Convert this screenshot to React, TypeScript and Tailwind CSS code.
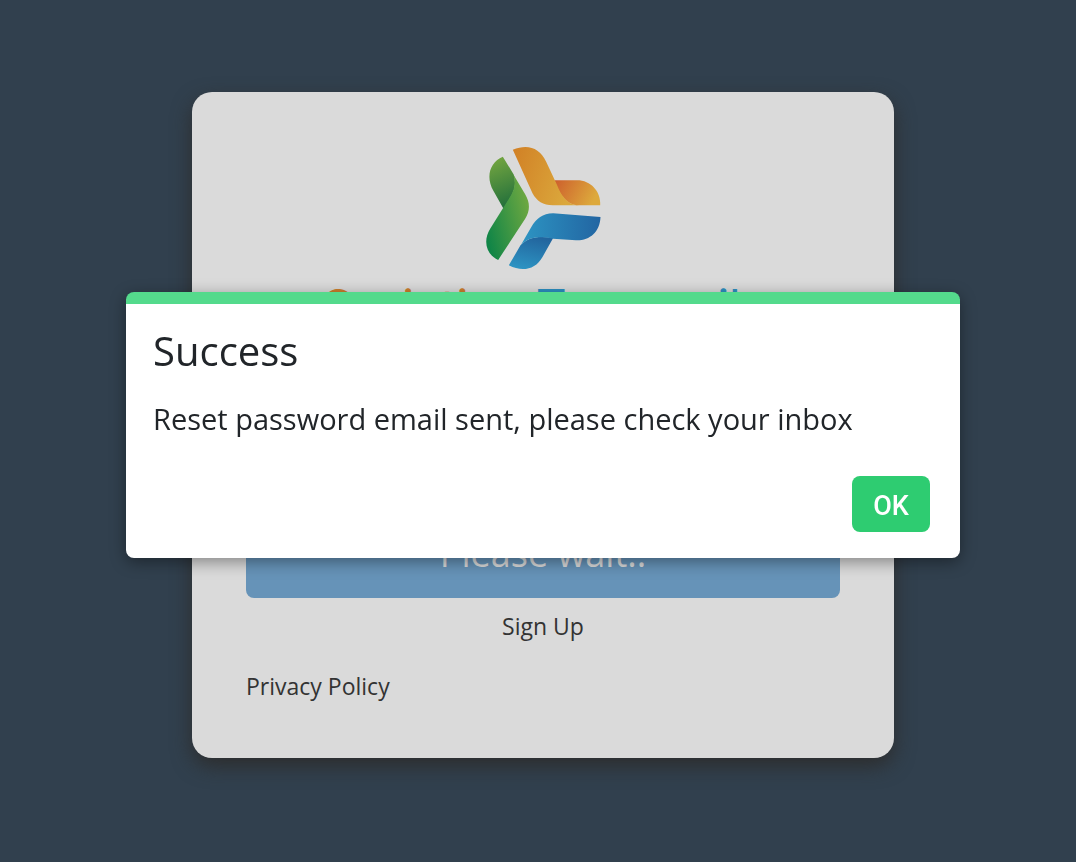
import { useState } from 'react';

function Logo() {
  return (
    <svg viewBox="36 30 350 378" className="h-[126px] w-[117px]" role="img" aria-label="Logo">
      <defs>
        <linearGradient id="orange" x1="0" y1="0" x2="1" y2="0.3">
          <stop offset="0%" stopColor="#d18025" />
          <stop offset="100%" stopColor="#dba83c" />
        </linearGradient>
        <linearGradient id="orangeFold" x1="0" y1="0" x2="1" y2="0.3">
          <stop offset="0%" stopColor="#cd5f2c" />
          <stop offset="100%" stopColor="#dda93c" />
        </linearGradient>
        <linearGradient id="green" x1="0" y1="0.7" x2="1" y2="0.2">
          <stop offset="0%" stopColor="#108547" />
          <stop offset="100%" stopColor="#74aa40" />
        </linearGradient>
        <linearGradient id="greenFold" x1="0.3" y1="0" x2="0.5" y2="1">
          <stop offset="0%" stopColor="#74a640" />
          <stop offset="100%" stopColor="#226f3b" />
        </linearGradient>
        <linearGradient id="blue" x1="0" y1="0.3" x2="1" y2="0.3">
          <stop offset="0%" stopColor="#2d95c3" />
          <stop offset="100%" stopColor="#2265a2" />
        </linearGradient>
        <linearGradient id="blueFold" x1="0.6" y1="0" x2="0.3" y2="1">
          <stop offset="0%" stopColor="#22659e" />
          <stop offset="100%" stopColor="#2d94c3" />
        </linearGradient>
      </defs>
      <path d="M244 136H312C352 136 383 168 381 211H310C270 205 250 160 244 136Z" fill="url(#orangeFold)" />
      <path d="M119 44C164 26 199 38 219 80L252 151C263 178 281 211 318 211H239C210 211 190 198 178 175Z" fill="url(#orange)" />
      <path d="M89 65L122 119C132 155 121 176 91 221L61 168C36 124 51 81 89 65Z" fill="url(#greenFold)" />
      <path d="M121 119L156 178C171 204 171 226 156 251L75 375C38 358 29 316 51 281L103 198C119 174 130 154 121 119Z" fill="url(#green)" />
      <path d="M240 309L208 366C187 404 147 412 107 391L142 331C166 304 201 303 240 309Z" fill="url(#blueFold)" />
      <path d="M240 235L382 246C380 292 348 318 308 316L240 311C190 302 163 308 142 332L174 277C190 250 208 236 240 235Z" fill="url(#blue)" />
    </svg>
  );
}

export default function App() {
  const [open, setOpen] = useState(true);

  return (
    <div className="flex min-h-screen items-center justify-center bg-[#31404e] pb-3 pl-[10px] font-['Open_Sans',sans-serif] text-[#333333]">
      <main className="flex min-h-[666px] w-full max-w-[702px] flex-col items-center rounded-[20px] bg-[#dadada] px-[54px] pt-[53px] pb-14 shadow-[0_8px_20px_#2d2d2d]">
        <Logo />
        <h1 className="mt-3 font-['Inter',sans-serif] text-5xl whitespace-nowrap text-[#cc7e2d]">
          Curiative <span className="text-[#2c8fc0]">Transcails</span>
        </h1>
        <button
          type="button"
          disabled
          className="mt-auto w-full rounded-lg bg-[#6693b8] px-4 pt-2 pb-4 text-4xl leading-[56px] text-[#dadada]"
        >
          Please wait..
        </button>
        <a href="#signup" className="mt-3 text-[23px] leading-8">Sign Up</a>
        <a href="#privacy" className="mt-7 self-start text-[23px] leading-8">Privacy Policy</a>
      </main>

      {open && (
        <div className="fixed inset-0 flex items-center justify-center pb-3 pl-[10px]">
          <div
            role="dialog"
            aria-modal="true"
            aria-labelledby="dialog-title"
            className="w-full max-w-[834px] overflow-hidden rounded-lg border-t-12 border-[#54da8c] bg-white pt-[23px] pr-[30px] pb-[26px] pl-[27px] text-[#212529] shadow-[0_4px_16px_rgba(0,0,0,0.4)]"
          >
            <h2 id="dialog-title" className="text-[40px] leading-12">Success</h2>
            <p className="mt-5 text-[29px] leading-12">Reset password email sent, please check your inbox</p>
            <div className="mt-[33px] flex justify-end">
              <button
                type="button"
                onClick={() => setOpen(false)}
                className="h-14 w-[78px] rounded-lg bg-[#2ecc71] pt-1 font-['Roboto',sans-serif] text-[27px] font-medium text-white"
              >
                OK
              </button>
            </div>
          </div>
        </div>
      )}
    </div>
  );
}
